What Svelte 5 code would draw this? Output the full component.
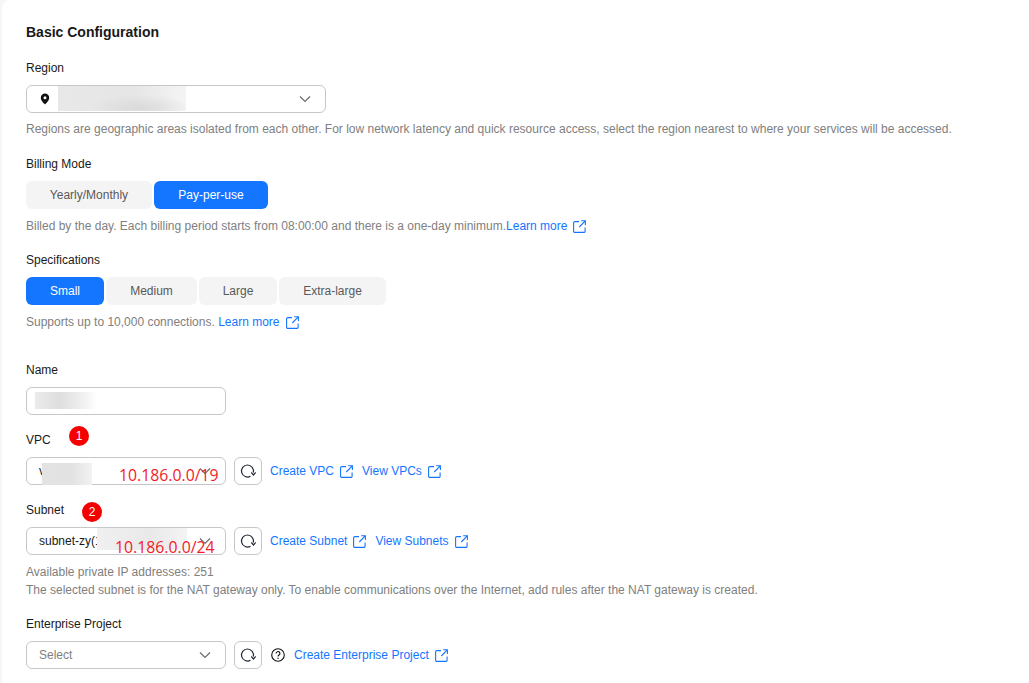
<script>
</script>

{#snippet ext()}
  <svg class="ext" viewBox="0 0 13 13" width="13" height="13" fill="none" stroke="#1476ff" stroke-width="1.1">
    <path d="M6 1.600H1.800a1.200 1.200 0 0 0-1.200 1.200v8.400a1.200 1.200 0 0 0 1.200 1.200h9.100a1.200 1.200 0 0 0 1.200-1.200V7.500" />
    <path d="M6.300 7 12 1.200M8.200.8h4.200V5" />
  </svg>
{/snippet}

{#snippet chevron(color)}
  <svg class="chev" viewBox="0 0 12 8" width="12" height="8" fill="none" stroke={color} stroke-width="1.3">
    <path d="M1 1.500 6 6.400 11 1.500" />
  </svg>
{/snippet}

{#snippet refresh()}
  <button class="refresh" aria-label="Refresh">
    <svg viewBox="0 0 16 16" width="16" height="16" fill="none" stroke="#252b3a" stroke-width="1.2">
      <path d="M10.500 13.200A6 6 0 1 1 13.300 9.500" />
      <path d="M11.300 9.500 13.500 12 15.700 9.500" />
    </svg>
  </button>
{/snippet}

<div class="panel">
  <h2>Basic Configuration</h2>

  <div class="label first">Region</div>
  <div class="select region">
    <svg class="pin" viewBox="0 0 10 12" width="10" height="12">
      <path fill-rule="evenodd" fill="#111" d="M5 .6a4.200 4.200 0 0 1 4.200 4.200c0 2.600-2.700 5.300-4.200 6.600C3.500 10.100.8 7.400.8 4.800A4.200 4.200 0 0 1 5 .6Zm0 2.700a1.500 1.500 0 1 0 0 3 1.500 1.500 0 0 0 0-3Z"/>
    </svg>
    <span class="grow"></span>
    {@render chevron("#6b6f78")}
    <div class="blur blur-region"></div>
  </div>
  <p class="hint">Regions are geographic areas isolated from each other. For low network latency and quick resource access, select the region nearest to where your services will be accessed.</p>

  <div class="label billing">Billing Mode</div>
  <div class="tabs">
    <button class="tab w126">Yearly/Monthly</button>
    <button class="tab active w114">Pay-per-use</button>
  </div>
  <p class="hint after-tabs">Billed by the day. Each billing period starts from 08:00:00 and there is a one-day minimum.<a href="#a">Learn more</a>{@render ext()}</p>

  <div class="label">Specifications</div>
  <div class="tabs">
    <button class="tab active w78">Small</button>
    <button class="tab w91">Medium</button>
    <button class="tab w78">Large</button>
    <button class="tab w107">Extra-large</button>
  </div>
  <p class="hint after-tabs">Supports up to 10,000 connections. <a href="#a">Learn more</a>{@render ext()}</p>

  <div class="label name">Name</div>
  <div class="select">
    <div class="blur blur-name"></div>
  </div>

  <div class="label">VPC<span class="badge b1">1</span></div>
  <div class="row">
    <div class="select">
      <span class="val">v</span><span class="grow"></span>
      {@render chevron("#6b6f78")}
      <div class="blur blur-vpc"></div>
      <span class="note n1">10.186.0.0/19</span>
    </div>
    {@render refresh()}
    <a href="#a">Create VPC</a>{@render ext()}
    <a href="#a" class="l2">View VPCs</a>{@render ext()}
  </div>

  <div class="label">Subnet<span class="badge b2">2</span></div>
  <div class="row">
    <div class="select">
      <span class="val">subnet-zy(1</span><span class="grow"></span>
      {@render chevron("#6b6f78")}
      <div class="blur blur-subnet"></div>
      <span class="note n2">10.186.0.0/24</span>
    </div>
    {@render refresh()}
    <a href="#a">Create Subnet</a>{@render ext()}
    <a href="#a" class="l2">View Subnets</a>{@render ext()}
  </div>
  <p class="hint after-tabs">Available private IP addresses: 251</p>
  <p class="hint stack">The selected subnet is for the NAT gateway only. To enable communications over the Internet, add rules after the NAT gateway is created.</p>

  <div class="label">Enterprise Project</div>
  <div class="row">
    <div class="select">
      <span class="placeholder">Select</span><span class="grow"></span>
      {@render chevron("#6b6f78")}
    </div>
    {@render refresh()}
    <svg class="help" viewBox="0 0 14 14" width="14" height="14" fill="none" stroke="#111" stroke-width="1.1">
      <circle cx="7" cy="7" r="6.300" />
      <path d="M5.100 5.500a1.900 1.900 0 1 1 2.900 1.600c-.7.400-1 .8-1 1.500" />
      <path d="M7 9.800v1.100" />
    </svg>
    <a href="#a">Create Enterprise Project</a>{@render ext()}
  </div>
</div>

<style>
  :global(body) {
    margin: 0;
    background: #f6f6f6;
    font-family: "Liberation Sans", Arial, sans-serif;
  }
  .panel {
    margin-left: 2px;
    height: 683px;
    box-sizing: border-box;
    overflow: hidden;
    padding: 23px 0 0 24px;
    background: #fff;
    border-top-left-radius: 8px;
    font-size: 12px;
    color: #191919;
  }
  h2 {
    margin: 0;
    font-size: 14px;
    line-height: 18px;
    font-weight: 700;
    color: #191919;
  }
  .label {
    position: relative;
    height: 18px;
    margin-top: 16px;
    margin-bottom: 8px;
    line-height: 18px;
  }
  .label.first { margin-top: 18px; }
  .label.billing { margin-top: 17px; }
  .label.name { margin-top: 30px; }
  .select {
    position: relative;
    box-sizing: border-box;
    width: 200px;
    height: 28px;
    border: 1px solid #c7c7c9;
    border-radius: 6px;
    background: #fff;
    display: flex;
    align-items: center;
    padding: 0 14px 0 12px;
  }
  .select.region { width: 300px; padding-left: 13px; }
  .grow { flex: 1; }
  .val { color: #191919; }
  .placeholder { color: #808080; }
  .hint {
    margin: 7px 0 0;
    height: 18px;
    line-height: 18px;
    color: #808080;
    display: flex;
    align-items: center;
    white-space: pre;
  }
  .hint.after-tabs { margin-top: 8px; }
  .hint.stack { margin-top: 0; }
  a {
    color: #1476ff;
    text-decoration: none;
  }
  .ext { margin-left: 6px; flex: none; }
  .tabs { display: flex; gap: 2px; }
  .tab {
    height: 28px;
    border: 0;
    padding: 0;
    border-radius: 6px;
    background: #f4f4f4;
    color: #595959;
    font: inherit;
    font-size: 12px;
  }
  .tab.active { background: #1476ff; color: #fff; }
  .w126 { width: 126px; }
  .w114 { width: 114px; }
  .w78 { width: 78px; }
  .w91 { width: 91px; }
  .w107 { width: 107px; }
  .row { display: flex; align-items: center; }
  .refresh {
    box-sizing: border-box;
    width: 28px;
    height: 28px;
    margin: 0 8px;
    padding: 0;
    border: 1px solid #c7c7c9;
    border-radius: 6px;
    background: #fff;
    display: flex;
    align-items: center;
    justify-content: center;
  }
  .l2 { margin-left: 9px; }
  .help { margin: 0 9px 0 1px; flex: none; }
  .blur { position: absolute; }
  .blur-region {
    left: 31px; top: 0; width: 128px; height: 25px;
    background: radial-gradient(ellipse 50px 14px at 82px 22px, #dadada, rgba(218,218,218,0)), linear-gradient(90deg, #e8e8e8, #e6e6e6 60%, #f1f1f1 90%, #f4f4f4);
  }
  .blur-name {
    left: 8px; top: 4px; width: 62px; height: 17px;
    background: linear-gradient(90deg, #ebebeb, #dedede 40%, #f2f2f2 80%, #fff);
  }
  .blur-vpc {
    left: 15px; top: 5px; width: 50px; height: 22px;
    background: linear-gradient(90deg, #e3e3e3, #e2e2e2 60%, #f2f2f2);
  }
  .blur-subnet {
    left: 70px; top: 0; width: 90px; height: 22px;
    background: linear-gradient(90deg, #f0f0f0, #e9e9e9 60%, #f4f4f4);
  }
  .note {
    position: absolute;
    font-family: "Open Sans", "Liberation Sans", sans-serif;
    font-size: 15.800px;
    line-height: 20px;
    color: #f01c28;
    white-space: nowrap;
  }
  .n1 { left: 92px; top: 7px; }
  .n2 { left: 88px; top: 9px; }
  .badge {
    position: absolute;
    width: 20px;
    height: 20px;
    border-radius: 50%;
    background: #f40000;
    color: #fff;
    font-size: 12px;
    line-height: 20px;
    text-align: center;
  }
  .b1 { left: 43px; top: -5px; }
  .b2 { left: 56px; top: 1px; }
</style>
